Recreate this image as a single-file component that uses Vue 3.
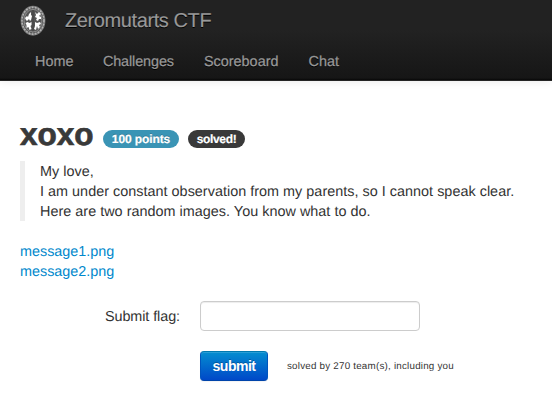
<script setup>
const links = ['Home', 'Challenges', 'Scoreboard', 'Chat']
const files = ['message1.png', 'message2.png']
</script>

<template>
  <div class="page">
    <header class="navbar">
      <div class="brand">
        <svg class="seal" width="26" height="32" viewBox="0 0 26 32">
          <ellipse cx="13" cy="15.7" rx="12.4" ry="15" fill="#777" />
          <ellipse cx="13" cy="15.7" rx="10.9" ry="13.4" fill="none" stroke="#b4b4b4" stroke-width="1.6" stroke-dasharray="1.7 1.4" />
          <ellipse cx="13" cy="15.7" rx="9.6" ry="12" fill="none" stroke="#484848" stroke-width="0.8" stroke-dasharray="2 1" />
          <ellipse cx="13" cy="15.7" rx="8.9" ry="11.3" fill="#555" stroke="#a4a4a4" stroke-width="0.6" />
          <path d="M5 13l2-2 1 1 1-3 2-2v3l1 1-1 4-1 1-1-2-2 2-1-1zM15 7l2 2 2-2 2 2-2 2 2 1v2h-2l-1 2-2-1 1-2-2-1 1-2zM5.500 18l2-1 2 1 2-1v3l-1 1 1 3-2 1-1-3-2 1v-3zM15 17l2 1 3-1 1 2-2 1 1 2-2 2-1-3-1 4-2-1 1-3z" fill="#fff" />
          <path d="M13 5v21" stroke="#3c3c3c" stroke-width="0.8" />
        </svg>
        <span class="title">Zeromutarts CTF</span>
      </div>
      <nav class="nav">
        <a v-for="l in links" :key="l" :class="l.toLowerCase()">{{ l }}</a>
      </nav>
    </header>
    <main class="content">
      <div class="heading">
        <h1>xoxo</h1>
        <span class="badge info">100 points</span>
        <span class="badge dark">solved!</span>
      </div>
      <blockquote>
        <p>My love,</p>
        <p>I am under constant observation from my parents, so I cannot speak clear.</p>
        <p>Here are two random images. You know what to do.</p>
      </blockquote>
      <div class="files"><a v-for="f in files" :key="f">{{ f }}</a></div>
      <form class="form" @submit.prevent>
        <label for="flag">Submit flag:</label>
        <input id="flag" type="text" />
        <button type="submit">submit</button>
        <small>solved by 270 team(s), including you</small>
      </form>
    </main>
  </div>
</template>

<style>
body { background: #fff; }
</style>
<style scoped>
.page { height: 404px; overflow: hidden; box-sizing: border-box; font: 14.4px/20px "Liberation Sans", Arial, sans-serif; color: #333; text-rendering: geometricPrecision; }
.navbar { box-sizing: border-box; height: 81px; background: linear-gradient(#222 0, #222 30px, #161616 78px, #080808 80px); border-bottom: 1px solid #252525; box-shadow: 0 1px 8px rgba(0, 0, 0, .08); color: #999; text-shadow: 0 1px 0 #000; }
.brand { display: flex; height: 41px; align-items: center; padding-left: 20px; gap: 19px; }
.seal { display: block; }
.title { padding-top: 1px; font-size: 20px; letter-spacing: -.4px; -webkit-text-stroke: .15px; }
.nav { display: flex; padding-top: 11px; padding-left: 35px; gap: 30px; -webkit-text-stroke: .25px; }
.challenges { letter-spacing: -.1px; margin-left: -.5px; }
.scoreboard { letter-spacing: .02px; }
.content { padding: 38px 20px 0; }
.nav + .content { padding-top: 38px; }
.heading { display: flex; height: 40px; align-items: center; }
h1 { margin: -10px 0 0; width: 83px; font-size: 31.5px; line-height: 40px; color: #393939; -webkit-text-stroke: .7px; }
.badge { box-sizing: border-box; height: 18px; line-height: 18px; border-radius: 9px; color: #fff; font-size: 12px; font-weight: bold; text-align: center; text-shadow: 0 -1px 0 rgba(0, 0, 0, .25); white-space: nowrap; -webkit-text-stroke: .2px; }
.info { width: 76px; background: #3a94b5; margin-right: 9px; letter-spacing: -.1px; }
.dark { width: 57px; background: #393939; letter-spacing: -.35px; }
blockquote { box-sizing: border-box; height: 60px; margin: 2px 0 20px; padding: 1px 0 0 15px; border-left: 5px solid #eee; white-space: nowrap; }
blockquote p { margin: 0; letter-spacing: .02px; }
.files { display: flex; flex-direction: column; padding-top: 1px; color: #08c; letter-spacing: -.02px; }
.form { display: grid; grid-template-columns: 160px 88px 1fr; grid-template-rows: 30px 30px; gap: 20px 0; margin-top: 19px; }
label { align-self: center; padding-top: 2px; text-align: right; letter-spacing: -.08px; }
input { grid-column: 2 / 4; justify-self: start; margin-left: 20px; box-sizing: border-box; width: 220px; height: 30px; border: 1px solid #ccc; border-radius: 4px; box-shadow: inset 0 1px 1px rgba(0, 0, 0, .075); background: #fff; }
button { grid-column: 2; margin-left: 20px; width: 68px; height: 30px; padding: 0; border: 1px solid; border-color: #0079b0 #0055bd #0044aa; border-radius: 4px; background: linear-gradient(#0490d0, #0046c8) border-box; color: #fff; font: bold 14px/20px "Liberation Sans", Arial, sans-serif; letter-spacing: -.5px; text-shadow: 0 -1px 0 rgba(0, 0, 0, .25); box-shadow: inset 0 1px 0 rgba(255, 255, 255, .15), 0 1px 1px rgba(0, 0, 0, .05); }
small { align-self: center; margin-left: 19px; padding-top: 1px; font-size: 9.8px; letter-spacing: .22px; white-space: nowrap; }
</style>
